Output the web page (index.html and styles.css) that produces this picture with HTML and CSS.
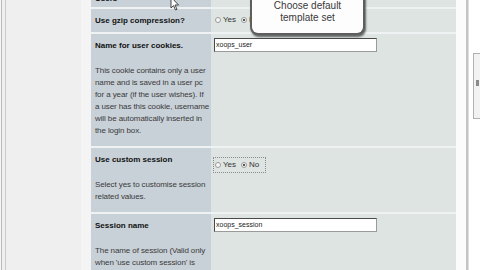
FILE: index.html
```html
<!DOCTYPE html>
<html>
<head>
<meta charset="utf-8">
<link rel="stylesheet" href="styles.css">
</head>
<body>
<div class="screen">
  <div class="sidebar"><div class="sidebar-edge"></div></div>
  <div class="form">
    <div class="cell label row-cut"><div class="title">Users</div></div>
    <div class="cell value row-cut"></div>

    <div class="cell label single"><div class="title">Use gzip compression?</div></div>
    <div class="cell value radios-cell">
      <span class="radio"></span><span class="opt">Yes</span>
      <span class="radio on"></span><span class="opt">No</span>
    </div>

    <div class="cell label">
      <div class="title">Name for user cookies.</div>
      <div class="desc">This cookie contains only a user<br>name and is saved in a user pc<br>for a year (if the user wishes). If<br>a user has this cookie, username<br>will be automatically inserted in<br>the login box.</div>
    </div>
    <div class="cell value input-cell"><div class="textbox">xoops_user</div></div>

    <div class="cell label">
      <div class="title">Use custom session</div>
      <div class="desc">Select yes to customise session<br>related values.</div>
    </div>
    <div class="cell value radios-cell low">
      <span class="focusbox"><span class="radio"></span><span class="opt">Yes</span>
      <span class="radio on"></span><span class="opt">No</span></span>
    </div>

    <div class="cell label">
      <div class="title">Session name</div>
      <div class="desc">The name of session (Valid only<br>when 'use custom session' is<br>enabled)</div>
    </div>
    <div class="cell value input-cell"><div class="textbox">xoops_session</div></div>
  </div>
  <div class="rightpane">
    <div class="gap"></div>
    <div class="divider"></div>
    <div class="scrollcol"><div class="thumb"><div class="grip"></div></div></div>
  </div>

  <div class="tooltip">Choose default<br>template set</div>
  <svg class="cursor" width="10" height="16" viewBox="0 0 10 16">
    <path d="M1 0 L1 11 L3.5 8.6 L5.5 13 L7 12.3 L5 8 L8.5 8 Z" fill="#fff" stroke="#333" stroke-width="0.9"/>
  </svg>
</div>
</body>
</html>
```

FILE: styles.css
```css
html, body {
  margin: 0;
  padding: 0;
  width: 480px;
  height: 270px;
  overflow: hidden;
  background: #ffffff;
  font-family: "Liberation Sans", Arial, sans-serif;
}

.screen {
  position: relative;
  display: flex;
  align-items: flex-start;
  width: 480px;
  height: 270px;
  overflow: hidden;
}

.sidebar {
  width: 80px;
  height: 270px;
  background: #efefef;
  border-left: 1px solid #f6f6f6;
  flex: none;
  margin-right: 10px;
  box-shadow: 10px 0 0 #f4f4f4;
}

.sidebar-edge {
  height: 100%;
  width: 5px;
  border-left: 1px solid #b9b9b9;
  border-right: 1px solid #c9c9c9;
  box-sizing: border-box;
}

.form {
  flex: none;
  width: 365px;
  display: grid;
  grid-template-columns: 120px 245px;
  row-gap: 2px;
  align-content: start;
  background: #eef2f2;
  margin-top: -13px;
}

.cell {
  box-sizing: border-box;
}

.label {
  background: #c9d1d8;
  padding: 6px 2px 9px 4px;
  color: #1a1a1a;
  font-size: 8px;
  line-height: 12px;
  white-space: nowrap;
}

.value {
  background: #dde4e2;
  padding: 4px 0 0 3px;
}

.row-cut {
  height: 20px;
  overflow: hidden;
}

.label.single {
  padding-bottom: 5px;
}

.title {
  font-weight: bold;
  color: #111;
  margin-bottom: 13px;
}

.single .title,
.row-cut .title {
  margin-bottom: 0;
}

.desc {
  color: #3a3a3a;
  letter-spacing: -0.1px;
}

.radios-cell {
  padding: 5px 0 0 4px;
  font-size: 8px;
  line-height: 12px;
  color: #333;
  display: flex;
  align-items: flex-start;
}

.radios-cell .radio {
  margin-top: 3px;
}

.radios-cell.low {
  padding-top: 11px;
}

.focusbox {
  display: flex;
  align-items: flex-start;
  outline: 1px dotted #8a8a8a;
  outline-offset: 1px;
  height: 12px;
}

.radio {
  width: 6px;
  height: 6px;
  border-radius: 50%;
  border: 1px solid #9a9a9a;
  background: #f6f6f6;
  display: inline-block;
  margin-right: 2px;
  position: relative;
  box-sizing: border-box;
  flex: none;
}

.radio.on::after {
  content: "";
  position: absolute;
  left: 1px;
  top: 1px;
  width: 2px;
  height: 2px;
  border-radius: 50%;
  background: #222;
}

.opt {
  margin-right: 5px;
}

.input-cell {
  padding-top: 4px;
}

.textbox {
  width: 163px;
  height: 14px;
  box-sizing: border-box;
  background: #ffffff;
  border: 1px solid #4a4a4a;
  border-right-color: #9a9a9a;
  border-bottom-color: #9a9a9a;
  font-size: 7px;
  line-height: 12px;
  padding-left: 1px;
  color: #222;
}

.rightpane {
  flex: 1;
  height: 270px;
  display: flex;
  background: #ffffff;
}

.gap {
  width: 10px;
  background: #fbfbfb;
}

.divider {
  width: 2px;
  background: #c4c4c4;
  border-right: 1px solid #dedede;
}

.scrollcol {
  flex: 1;
  padding: 53px 0 0 4px;
}

.thumb {
  height: 64px;
  border: 1px solid #b0b0b0;
  border-right: none;
  background: #f2f2f2;
  position: relative;
}

.grip {
  position: absolute;
  left: 2px;
  top: 26px;
  width: 3px;
  height: 6px;
  background: #8a8a8a;
}

.tooltip {
  position: absolute;
  left: 250px;
  top: -12px;
  width: 115px;
  height: 47px;
  box-sizing: border-box;
  padding-top: 12px;
  background: #fdfdfd;
  border: 2px solid #5e5e5e;
  border-top: none;
  border-radius: 0 0 8px 8px;
  box-shadow: 1px 2px 2px rgba(0, 0, 0, 0.55);
  text-align: center;
  font-size: 10px;
  line-height: 12px;
  color: #3a3a3a;
}

.cursor {
  position: absolute;
  left: 170px;
  top: -3px;
}
```
